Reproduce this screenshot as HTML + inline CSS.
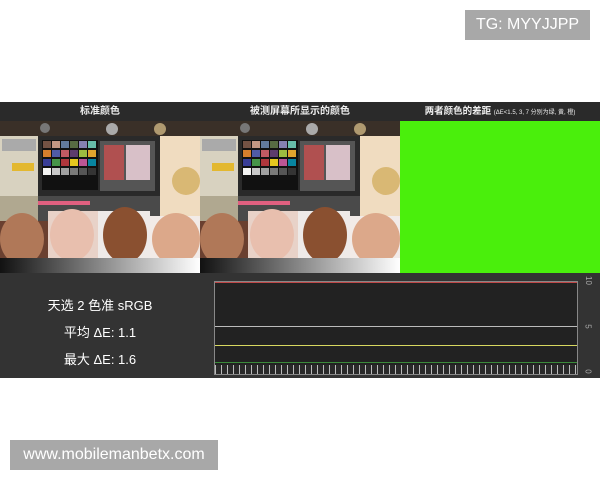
<!DOCTYPE html>
<html><head><meta charset="utf-8"><style>
*{margin:0;padding:0;box-sizing:border-box}
body{width:600px;height:480px;background:#fff;position:relative;overflow:hidden;font-family:"Liberation Sans","Noto Sans CJK SC",sans-serif}
.a{position:absolute}
.wm{background:#a8a8a8;color:#fff;font-size:16px;display:flex;align-items:center;justify-content:center}
.hdr{color:#eee;font-size:10px;font-weight:bold;top:102px;height:19px;line-height:19px;text-align:center}
</style></head><body>
<div class="a wm" style="left:465px;top:10px;width:125px;height:30px">TG: MYYJJPP</div>
<div class="a" style="left:0;top:102px;width:600px;height:19px;background:#2a2a2a"></div>
<div class="a hdr" style="left:0;width:200px">标准颜色</div>
<div class="a hdr" style="left:200px;width:200px">被测屏幕所显示的颜色</div>
<div class="a hdr" style="left:400px;width:200px;font-size:9.5px">两者颜色的差距 <span style="font-size:6px;font-weight:normal">(ΔE&lt;1.5, 3, 7 分别为绿, 黄, 橙)</span></div>

<svg class="a" style="left:0;top:121px" width="400" height="152">
<defs><g id="p">
<rect width="200" height="152" fill="#d8cbb8"/>
<rect width="200" height="15" fill="#3a3028"/>
<circle cx="45" cy="7" r="5" fill="#777"/><circle cx="112" cy="8" r="6" fill="#aaa"/><circle cx="160" cy="8" r="6" fill="#b09a70"/>
<rect x="0" y="15" width="38" height="60" fill="#d8d2c0"/>
<rect x="2" y="18" width="34" height="12" fill="#aaa"/>
<rect x="12" y="42" width="22" height="8" fill="#e3b830"/>
<rect x="38" y="15" width="162" height="88" fill="#2a2a2a"/>
<rect x="160" y="15" width="40" height="90" fill="#f0dcc0"/>
<circle cx="186" cy="60" r="14" fill="#d9b874"/>
<rect x="42" y="19" width="56" height="50" fill="#111"/>
<g>
<rect x="43" y="20" width="8" height="7" fill="#735244"/><rect x="52" y="20" width="8" height="7" fill="#c29682"/><rect x="61" y="20" width="8" height="7" fill="#627a9d"/><rect x="70" y="20" width="8" height="7" fill="#576c43"/><rect x="79" y="20" width="8" height="7" fill="#8580b1"/><rect x="88" y="20" width="8" height="7" fill="#67bdaa"/>
<rect x="43" y="29" width="8" height="7" fill="#d67e2c"/><rect x="52" y="29" width="8" height="7" fill="#505ba6"/><rect x="61" y="29" width="8" height="7" fill="#c15a63"/><rect x="70" y="29" width="8" height="7" fill="#5e3c6c"/><rect x="79" y="29" width="8" height="7" fill="#9dbc40"/><rect x="88" y="29" width="8" height="7" fill="#e0a32e"/>
<rect x="43" y="38" width="8" height="7" fill="#383d96"/><rect x="52" y="38" width="8" height="7" fill="#469449"/><rect x="61" y="38" width="8" height="7" fill="#af363c"/><rect x="70" y="38" width="8" height="7" fill="#e7c71f"/><rect x="79" y="38" width="8" height="7" fill="#bb5695"/><rect x="88" y="38" width="8" height="7" fill="#0885a1"/>
<rect x="43" y="47" width="8" height="7" fill="#f3f3f2"/><rect x="52" y="47" width="8" height="7" fill="#c8c8c8"/><rect x="61" y="47" width="8" height="7" fill="#a0a0a0"/><rect x="70" y="47" width="8" height="7" fill="#7a7a79"/><rect x="79" y="47" width="8" height="7" fill="#555555"/><rect x="88" y="47" width="8" height="7" fill="#343434"/>
</g>
<rect x="100" y="20" width="55" height="50" fill="#555"/>
<rect x="104" y="24" width="20" height="35" fill="#b05050"/><rect x="126" y="24" width="24" height="35" fill="#d8c0c8"/>
<rect x="38" y="75" width="122" height="28" fill="#4a4a4a"/>
<rect x="30" y="80" width="60" height="4" fill="#e06080"/>
<rect x="0" y="75" width="38" height="30" fill="#b0a890"/>
<rect x="0" y="100" width="48" height="37" fill="#6a4030"/>
<ellipse cx="22" cy="118" rx="22" ry="26" fill="#b07858"/>
<rect x="48" y="90" width="50" height="47" fill="#e8d2c8"/>
<ellipse cx="72" cy="114" rx="22" ry="26" fill="#e8bfae"/>
<rect x="98" y="90" width="52" height="47" fill="#eeeae8"/>
<ellipse cx="125" cy="114" rx="22" ry="28" fill="#8a5030"/>
<rect x="150" y="95" width="50" height="42" fill="#f2ebe8"/>
<ellipse cx="176" cy="118" rx="24" ry="26" fill="#dca88a"/>
<rect y="137" width="200" height="15" fill="url(#gr)"/>
</g>
<linearGradient id="gr"><stop offset="0" stop-color="#111"/><stop offset="1" stop-color="#fff"/></linearGradient>
</defs>
<use href="#p"/><use href="#p" x="200"/>
</svg>
<div class="a" style="left:400px;top:121px;width:200px;height:152px;background:#4aef0c"></div>
<div class="a" style="left:0;top:273px;width:600px;height:105px;background:#333"></div>
<div class="a" style="left:0;top:292px;width:200px;text-align:center;color:#fff;font-size:13px;line-height:27px">天选 2 色准 sRGB<br>平均 ΔE: 1.1<br>最大 ΔE: 1.6</div>
<div class="a" style="left:214px;top:281px;width:364px;height:94px;background:#222;border:1px solid #888"></div>
<div class="a" style="left:215px;top:282px;width:362px;height:1px;background:#c04848"></div>
<div class="a" style="left:215px;top:326px;width:362px;height:1px;background:#bbb"></div>
<div class="a" style="left:215px;top:345px;width:362px;height:1px;background:#d8d860"></div>
<div class="a" style="left:215px;top:362px;width:362px;height:1px;background:#3a8a3a"></div>
<div class="a" style="left:215px;top:365px;width:362px;height:9px;background:repeating-linear-gradient(90deg,#bbb 0 1px,#2a2a2a 1px 6px)"></div>
<div class="a" style="left:584px;top:276px;color:#aaa;font-size:8px;transform:rotate(90deg)">10</div>
<div class="a" style="left:586px;top:322px;color:#aaa;font-size:8px;transform:rotate(90deg)">5</div>
<div class="a" style="left:586px;top:367px;color:#aaa;font-size:8px;transform:rotate(90deg)">0</div>
<div class="a wm" style="left:10px;top:440px;width:208px;height:30px">www.mobilemanbetx.com</div>
</body></html>
